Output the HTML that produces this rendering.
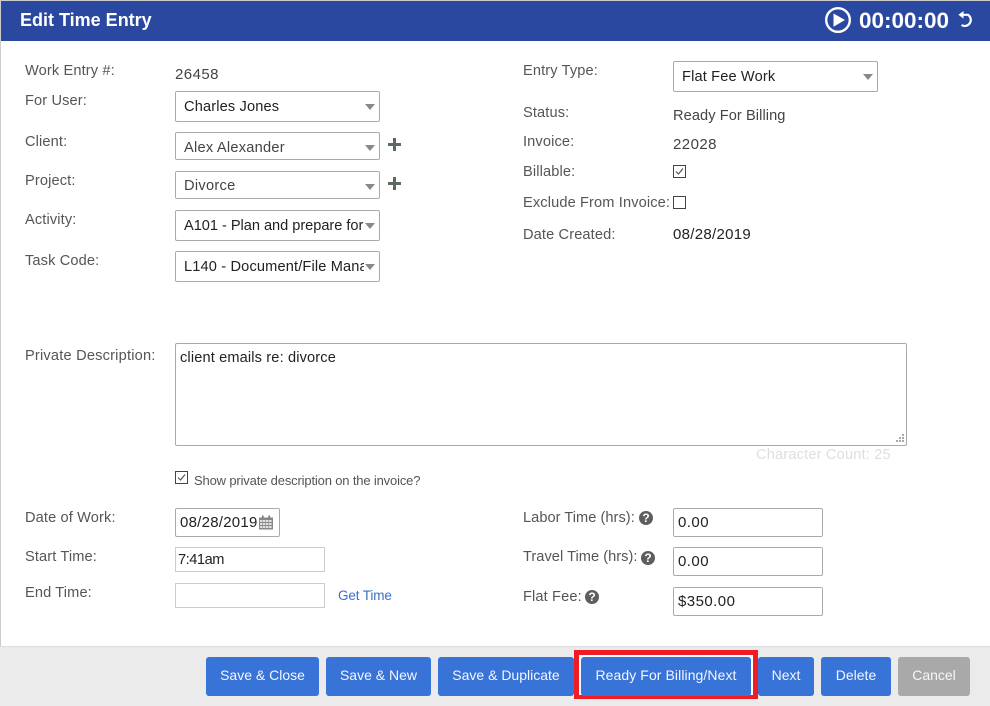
<!DOCTYPE html>
<html>
<head>
<meta charset="utf-8">
<style>
html,body{margin:0;padding:0;background:#fff}
body{width:990px;height:706px;position:relative;overflow:hidden;font-family:"Liberation Sans",Arial,sans-serif;font-size:14px;color:#555}
.a{position:absolute;white-space:nowrap}
.l{position:absolute;white-space:nowrap;font-size:14.6px;line-height:18px;color:#555;letter-spacing:.13px}
.v{position:absolute;white-space:nowrap;font-size:14.6px;line-height:18px;color:#444;letter-spacing:.08px}
.d{font-size:15px;letter-spacing:.45px}
.s{position:absolute;box-sizing:border-box;width:205px;height:31px;left:175px;background:#fff;border:1px solid #aaa;border-radius:2px;font-size:14.6px;line-height:31px;padding-left:8px;color:#222;letter-spacing:.15px;white-space:nowrap;overflow:hidden}
.s span{display:block;width:180px;overflow:hidden}
.s:after{content:"";position:absolute;right:4px;top:12px;border-left:5.5px solid transparent;border-right:5.5px solid transparent;border-top:6px solid #888}
.i{position:absolute;box-sizing:border-box;background:#fff;border:1px solid #aaa;border-radius:2px;font-size:15px;color:#222;line-height:28px;padding-left:4px;height:29px;white-space:nowrap;letter-spacing:.45px}
.t{position:absolute;box-sizing:border-box;background:#fff;border:1px solid #ccc;left:175px;width:150px;height:25px;font-size:14px;color:#222;line-height:24px;padding-left:2px;letter-spacing:-.25px}
.b{position:absolute;top:657px;height:39px;background:#3873d8;border-radius:3px;color:#f4f7fd;font-size:14px;line-height:37px;text-align:center;white-space:nowrap}
.c{position:absolute;box-sizing:border-box;width:13px;height:13px;border:1px solid #444;background:#fff}
.q{position:absolute;width:14px;height:14px;border-radius:50%;background:#5e5e5e;color:#fff;font-size:12px;font-weight:bold;line-height:14px;text-align:center}
.p{position:absolute;width:13px;height:13px}
.p:before{content:"";position:absolute;left:5px;top:0;width:3px;height:13px;background:#5b6b5f}
.p:after{content:"";position:absolute;left:0;top:5px;width:13px;height:3px;background:#5b6b5f}
</style>
</head>
<body>
<div class="a" style="left:0;top:0;width:1px;height:646px;background:#ccc"></div>
<div class="a" style="left:0;top:0;width:990px;height:1px;background:#ccc"></div>
<div class="a" style="left:1px;top:1px;width:989px;height:40px;background:#2a48a0"></div>
<div class="a" style="left:20px;top:10px;color:#fff;font-size:18px;font-weight:bold;line-height:20px">Edit Time Entry</div>

<svg class="a" style="left:824px;top:6px" width="28" height="28" viewBox="0 0 28 28">
<circle cx="14" cy="14" r="11.8" fill="none" stroke="#fff" stroke-width="2.4"/>
<path d="M9.5 7.5 L21 14 L9.5 20.8 Z" fill="#fff"/>
</svg>
<div class="a" style="left:859px;top:8px;color:#fff;font-size:22.5px;font-weight:bold;line-height:25px;letter-spacing:0">00:00:00</div>
<svg class="a" style="left:957px;top:10px" width="20" height="20" viewBox="0 0 20 20">
<path d="M4 4.8 H11 A5.9 5.9 0 1 1 4.5 15" fill="none" stroke="#fff" stroke-width="2.2"/>
<path d="M6.5 1 L1.4 4.8 L6.5 8.6 Z" fill="#fff"/>
</svg>

<div class="l" style="left:25px;top:62px">Work Entry #:</div>
<div class="v d" style="left:175px;top:66px">26458</div>
<div class="l" style="left:25px;top:92px">For User:</div>
<div class="s" style="top:91px"><span>Charles Jones</span></div>
<div class="l" style="left:25px;top:133px">Client:</div>
<div class="s" style="top:132px;height:28px;line-height:30px;color:#444;letter-spacing:.25px"><span>Alex Alexander</span></div>
<div class="p" style="left:388px;top:138px"></div>
<div class="l" style="left:25px;top:172px">Project:</div>
<div class="s" style="top:171px;height:28px;line-height:29px;color:#444;letter-spacing:.3px"><span>Divorce</span></div>
<div class="p" style="left:388px;top:177px"></div>
<div class="l" style="left:25px;top:211px">Activity:</div>
<div class="s" style="top:210px;letter-spacing:-.03px"><span>A101 - Plan and prepare for</span></div>
<div class="l" style="left:25px;top:252px">Task Code:</div>
<div class="s" style="top:251px"><span>L140 - Document/File Management</span></div>

<div class="l" style="left:523px;top:62px">Entry Type:</div>
<div class="s" style="left:673px;top:61px"><span>Flat Fee Work</span></div>
<div class="l" style="left:523px;top:104px">Status:</div>
<div class="v" style="left:673px;top:107px">Ready For Billing</div>
<div class="l" style="left:523px;top:133px">Invoice:</div>
<div class="v d" style="left:673px;top:136px">22028</div>
<div class="l" style="left:523px;top:163px">Billable:</div>
<div class="c" style="left:673px;top:165px"><svg style="position:absolute;left:0;top:0" width="11" height="11" viewBox="0 0 11 11"><path d="M2 5.5 L4.5 8 L9 2.5" fill="none" stroke="#555" stroke-width="1.2"/></svg></div>
<div class="l" style="left:523px;top:194px">Exclude From Invoice:</div>
<div class="c" style="left:673px;top:196px"></div>
<div class="l" style="left:523px;top:226px">Date Created:</div>
<div class="v" style="left:673px;top:226px;color:#222;font-size:15px;letter-spacing:.3px">08/28/2019</div>

<div class="l" style="left:25px;top:347px;letter-spacing:.2px">Private Description:</div>
<div class="a" style="left:175px;top:343px;width:732px;height:103px;box-sizing:border-box;border:1px solid #aaa;border-radius:2px;padding:5px 4px;font-size:14.6px;line-height:18px;color:#222;letter-spacing:.14px">client emails re: divorce</div>
<svg class="a" style="left:894px;top:433px" width="11" height="11" viewBox="0 0 11 11"><g fill="#aaa"><rect x="8" y="1" width="2" height="2"/><rect x="5" y="4" width="2" height="2"/><rect x="8" y="4" width="2" height="2"/><rect x="2" y="7" width="2" height="2"/><rect x="5" y="7" width="2" height="2"/><rect x="8" y="7" width="2" height="2"/></g></svg>
<div class="a" style="left:756px;top:446px;font-size:14.6px;line-height:18px;color:#dcdfe1;letter-spacing:.18px">Character Count: 25</div>

<div class="c" style="left:175px;top:471px"><svg style="position:absolute;left:0;top:0" width="11" height="11" viewBox="0 0 11 11"><path d="M2 5.5 L4.5 8 L9 2.5" fill="none" stroke="#555" stroke-width="1.2"/></svg></div>
<div class="a" style="left:194px;top:473px;font-size:13px;line-height:15px;color:#555;letter-spacing:-.16px">Show private description on the invoice?</div>

<div class="l" style="left:25px;top:509px">Date of Work:</div>
<div class="i" style="left:175px;top:508px;width:105px;padding-left:4px;letter-spacing:.25px">08/28/2019</div>
<svg class="a" style="left:258px;top:515px" width="16" height="15" viewBox="0 0 16 15">
<path d="M1 2.5H15V14.5H1Z" fill="#888"/>
<g fill="#e0e0e0"><rect x="2" y="5" width="2.4" height="2"/><rect x="5" y="5" width="2.4" height="2"/><rect x="8" y="5" width="2.4" height="2"/><rect x="11" y="5" width="2.6" height="2"/><rect x="2" y="8" width="2.4" height="2"/><rect x="5" y="8" width="2.4" height="2"/><rect x="8" y="8" width="2.4" height="2"/><rect x="11" y="8" width="2.6" height="2"/><rect x="2" y="11" width="2.4" height="2"/><rect x="5" y="11" width="2.4" height="2"/><rect x="8" y="11" width="2.4" height="2"/><rect x="11" y="11" width="2.6" height="2"/></g>
<rect x="4" y="0.5" width="1.6" height="3" fill="#777"/><rect x="10.4" y="0.5" width="1.6" height="3" fill="#777"/>
</svg>
<div class="l" style="left:25px;top:548px">Start Time:</div>
<div class="t" style="top:547px;font-size:14.6px;letter-spacing:-.45px">7:41am</div>
<div class="l" style="left:25px;top:584px">End Time:</div>
<div class="t" style="top:583px"></div>
<div class="a" style="left:338px;top:588px;font-size:13.5px;line-height:16px;color:#3a6fc8;letter-spacing:-.12px">Get Time</div>

<div class="l" style="left:523px;top:509px;letter-spacing:.04px">Labor Time (hrs):</div>
<div class="q" style="left:639px;top:511px">?</div>
<div class="i" style="left:673px;top:508px;width:150px">0.00</div>
<div class="l" style="left:523px;top:548px;letter-spacing:.04px">Travel Time (hrs):</div>
<div class="q" style="left:641px;top:551px">?</div>
<div class="i" style="left:673px;top:547px;width:150px">0.00</div>
<div class="l" style="left:523px;top:588px">Flat Fee:</div>
<div class="q" style="left:585px;top:590px">?</div>
<div class="i" style="left:673px;top:587px;width:150px">$350.00</div>

<div class="a" style="left:0;top:646px;width:990px;height:60px;background:#ebebeb;border-top:1px solid #ddd;box-sizing:border-box"></div>
<div class="b" style="left:206px;width:113px">Save &amp; Close</div>
<div class="b" style="left:326px;width:105px">Save &amp; New</div>
<div class="b" style="left:438px;width:136px">Save &amp; Duplicate</div>
<div class="a" style="left:574px;top:650px;width:184px;height:49px;box-sizing:border-box;border:5px solid #ee1c25;border-bottom-width:4px;background:#fff"></div>
<div class="b" style="left:581px;width:170px;letter-spacing:.08px">Ready For Billing/Next</div>
<div class="b" style="left:758px;width:56px">Next</div>
<div class="b" style="left:821px;width:70px">Delete</div>
<div class="b" style="left:898px;width:72px;background:#a9a9a9">Cancel</div>
</body>
</html>
